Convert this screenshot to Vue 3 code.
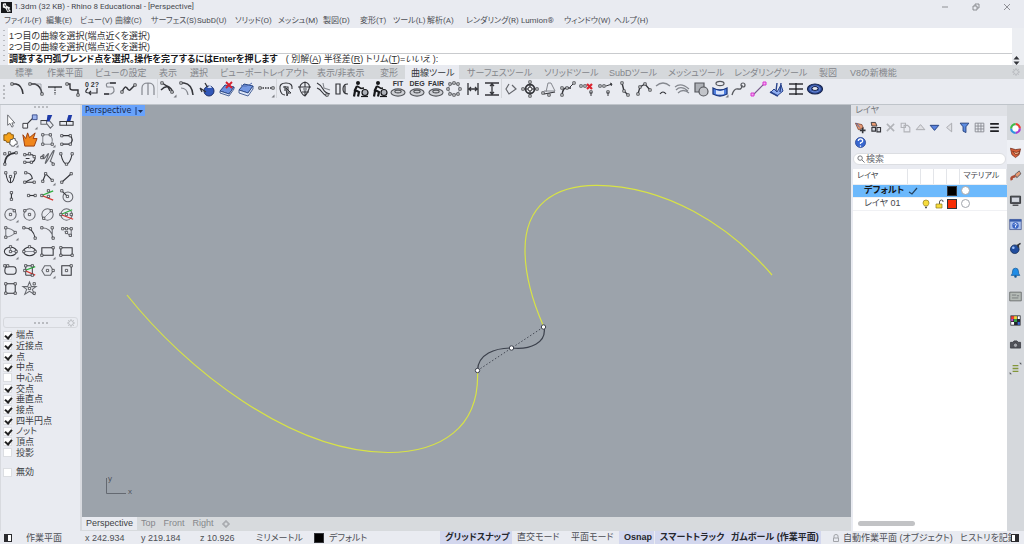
<script setup>
import { ref } from 'vue'

const INK = '#34353a'
const GREY = '#85888f'
const BLUE = '#3157b8'

/* Shape helpers: every icon is a list of shapes in an 18 x 18 box. */
const line = (d, s = INK, w = 1, dash) => ({ d, s, f: 'none', w, dash })
const fill = (d, f, s = 'none', w = 1) => ({ d, s, f, w })
const disc = (x, y, r) => `M${x - r} ${y}a${r} ${r} 0 1 0 ${2 * r} 0a${r} ${r} 0 1 0 ${-2 * r} 0z`
const oval = (x, y, a, b) => `M${x - a} ${y}a${a} ${b} 0 1 0 ${2 * a} 0a${a} ${b} 0 1 0 ${-2 * a} 0z`
const nodes = (...pts) =>
  fill(pts.map(([x, y]) => `M${x - 1.2} ${y - 1.2}h2.4v2.4h-2.4z`).join(''), '#f4f5f8', INK, 0.8)
const more = fill('M17.5 14.500v3h-3z', '#77797f')
const word = (t, x, y, size) => ({ t, x, y, size })
const runner = (dx) => [
  fill(disc(6 + dx, 3, 2), '#17181b'),
  line(`M${5 + dx} 6L${3 + dx} 10L${7 + dx} 12L${6 + dx} 16.500M${3 + dx} 11L${2 + dx} 16.500`, '#17181b', 2.2),
  line(`M${5 + dx} 6L${9 + dx} 8.500L12 8`, '#17181b', 1.5),
  fill(disc(13, 12.5, 3), '#aeb1b8', '#17181b', 1.2),
  line('M9 16.500H16', '#17181b', 1.2),
]
const dish = (t) => [
  word(t, 9, 6, 7),
  fill(oval(9, 12.5, 7, 3.6), '#cfd1d6', '#55575c', 1.1),
  line(oval(9, 11.5, 3.2, 1.4), '#55575c', 1.1),
]

const toolGroups = [
  { id: 'fillets', icons: [
    [line('M4 4H8Q14 5 15 14', INK, 1.5), nodes([4, 4])],
    [line('M3 4H8Q14 6 15 14', INK, 1.5), line('M8 4H14V14', GREY, 0.7), nodes([3, 4], [15, 14])],
    [line('M2 7H16', INK, 1.4), line('M9 7V15', INK, 1.2, '1.5 1')],
    [line('M3 4H6V8Q6 10 9 10H14V15', INK, 1.4), nodes([3, 4], [14, 15])],
    [word('0 2?', 9, 7, 7), line('M5 8Q0 13 6 13H14V8M8 11L6 13L8 15', INK, 1.2)],
    [line('M14 3H8Q4 3 6 7H12Q15 12 10 14H3', GREY, 1.2), line('M9 3H15M3 14H8', INK, 1.3)],
    [line('M2 12Q5 5 7 8T10 10T15 5', INK, 1.5), nodes([2, 12], [15, 5])],
    [line('M3 15V8Q3 3 9 3T15 8V15M9 3V15', GREY, 1.2)],
  ] },
  { id: 'curve-edit', icons: [
    [line('M3 3L8 6Q13 8 14 13M2 10Q6 6 9 7L11 11', INK, 1.4), nodes([3, 3], [13, 12]), more],
    [line('M3 3H6Q14 4 15 15', INK, 1.5), line('M3 8Q9 8 10 15', GREY, 1.2), nodes([3, 3])],
    [fill(disc(11, 11, 5), BLUE, '#1b2d68'), line('M2 8L8 12M7 3L10 8M2 8L4 12', INK, 1.3), fill('M9 8L12 5L14 8z', '#c9d6f5')],
    [fill('M2 11L7 5L16 7L11 14z', '#6b8fdd', '#274481'), fill('M2 11L11 14L16 7V9L11 16L2 13z', '#dce5f7', '#274481', 0.8), line('M8 2L14 8M14 2L8 8', '#d6202f', 1.9)],
    [fill('M2 10L7 4L16 6L11 13z', '#7397e2', '#274481'), fill('M2 10L11 13L16 6V9L11 16L2 13z', '#dce5f7', '#274481', 0.8), line('M4 5Q9 8 15 3', '#506cae')],
    [line('M3 8H16', INK, 1.4, '1.5 1'), nodes([3, 8], [16, 8]), more],
  ] },
  { id: 'curve-tools', icons: [
    [line('M15 9Q16 3 9 3T3 9T8 15M6 7H11V13M8 6V11', INK, 1.1), line('M9 8L14 13L11 13L10 16z', INK)],
    [line('M9 2Q3 4 4 9T9 16M9 2Q15 4 13 9T9 16M2 7H15M6 12H13M9 2V16', INK, 1.1), fill(disc(9, 9, 2), '#92959b')],
    [line('M2 3Q6 5 8 9T15 14M2 8Q5 9 7 12T12 16', INK, 1.1), line('M8 3L9 8L15 10', GREY, 1.1), nodes([12, 15])],
    [line('M3 4H7V14H3zM15 4Q10 4 10 9T15 14M12 4V14', INK, 1.2)],
    runner(0),
    runner(1),
    dish('FIT'),
    dish('DEG'),
    dish('FAIR'),
    [line(disc(9, 9, 5.5), GREY, 0.8), nodes([5, 4], [9, 3], [13, 4], [15, 9], [13, 14], [9, 15], [5, 14], [3, 9])],
    [line('M4 3V15M14 3V15M5 9H13M7 7L5 9L7 11M11 7L13 9L11 11', INK, 1.3)],
    [line('M2 3H16M2 15H16M9 4V14M7 6L9 4L11 6M7 12L9 14L11 12', INK, 1.3, undefined)],
  ] },
  { id: 'points', icons: [
    [line('M7 4L4 9L7 14L14 9L10 5', '#66686e', 1.2)],
    [line('M9 2V16M2 9H16', INK, 1.1), line(disc(9, 9, 4.5), INK, 1.8), fill(disc(9, 9, 2), '#ffffff', INK), nodes([9, 2], [9, 16], [2, 9], [16, 9])],
    [line('M6 12L8 3H11L15 11H4', GREY), line('M4 14L15 12', INK, 1.2), nodes([3, 13], [9, 15])],
    [line('M3 15Q4 7 8 8L12 8', INK, 1.5), nodes([3, 8], [8, 8], [3, 15], [15, 3]), line('M11 7L14 4', INK)],
    [nodes([3, 6], [7, 6], [13, 12]), line('M13 12V16', INK), line('M9 4L14 9M14 4L9 9', '#dc2430', 2.2)],
    [nodes([3, 6], [7, 6], [11, 12]), line('M11 12V16M9 6L15 4M13 3L15 4L14 6', INK)],
    [line('M6 3L8 11L12 15', INK, 1.4), nodes([6, 3], [8, 11], [12, 15])],
    [line('M3 14L5 7L10 4L15 10', INK, 1.3), nodes([5, 7], [10, 4], [15, 10], [3, 14])],
    [line('M2 6Q9 0 16 6', GREY, 1.3), line('M6 14Q9 10 12 14', INK, 1.2)],
    [line('M2 7Q8 2 16 9M3 10Q8 5 15 11M5 13Q10 8 16 13', GREY, 1.2)],
    [fill('M3 3H12V12H3z', '#aeb1b7', '#55575c', 1.2), fill(disc(11.5, 11.5, 4.5), '#c2c4c9', '#55575c', 1.2)],
    [fill('M2 8Q9 12 16 8V14Q9 18 2 14z', '#4f7ede', '#1d397f', 1.3), fill('M5 10Q9 12 13 10V14Q9 15 5 14z', '#dbe5fa'), line(oval(9, 3.5, 4, 2.2), '#55575c', 1.2), more],
    [line('M2 15Q4 8 8 9T12 5', '#55575c', 1.3), line(disc(13, 5, 2), '#55575c', 1.2)],
    [line('M4 15L15 4', '#77598a', 1.1), fill('M2 13h3v3h-3zM14 2h3v3h-3z', '#f3a8f0', '#d734cf')],
    [fill('M3 12L6 9L9 12L13 5L15 11L9 16z', '#8fadf0', '#28438c'), line('M9 3L8 11M13 3L12 12M2 12L10 16', '#28438c', 1.4)],
    [line('M2 4H16M2 9H16M2 14H16M9 4V14', INK, 1.4), fill('M8 3h2v2h-2zM8 8h2v2h-2zM8 13h2v2h-2z', INK)],
    [fill(oval(9, 9, 7.5, 5), '#2e4d9d', '#17244e', 1.2), line(oval(9, 9, 5, 3), '#7d9ce4', 0.8), fill(oval(9, 8.500, 3, 2), '#e9ebf1', '#17244e')],
  ] },
]

const palette = [
  [fill('M6 2V13L8.500 11L10.500 15L12 14L10.500 10.500H13.500z', '#fff', '#66686e')],
  [line('M5 13L13 5', INK, 1.2), fill('M2 11h5v5h-5z', '#f4f5f8', INK), fill('M12 2h5v5h-5z', '#9db4ee', '#3c4f8d'), more],
  [line('M2 8H8V12H2zM8 11L12 16L15 13L11 8', '#66686e', 1.1), fill('M9 2H14L11 9H8z', '#1e3aa8'), line('M2 8H9', INK)],
  [fill('M11 2H15L13 9H9z', '#1e3aa8'), line('M2 9H16V13H2z', INK, 1.1), line('M9 9V13', INK)],
  [fill('M2 4h3l1-2h3l1 2h2v4l-2 1v3h-5l-1-2h-2z', '#f5a21c', '#80530e'), fill('M9 9h2l1-1h2v2l2 1v3h-2l-1 2h-3l-1-2h-1z', '#ffffff', '#55575c'), more],
  [fill('M2 4L5 8L7 2L9 7L15 2L13 8L17 8L14 16H4z', '#f0861c', '#9b3b0b')],
  [line('M4 4H11Q16 8 13 14H4V4', GREY, 1.1), nodes([4, 4], [12, 4], [4, 14], [14, 14]), more],
  [line('M4 5H13Q17 9 13 14H4', INK, 1.3), nodes([4, 5], [13, 5], [4, 14], [13, 14])],
  [line('M3 15Q3 4 14 3', INK, 1.7), nodes([3, 15], [3, 4], [8, 3], [15, 3])],
  [line('M4 5H12Q18 9 12 13H4M5 9H9', INK, 1.2), nodes([4, 5], [9, 4], [14, 7], [4, 13], [11, 13])],
  [line('M2 8Q6 2 5 7T8 6T8 10T12 6T12 12L15 14', '#66686e', 1.2), nodes([3, 8], [15, 15])],
  [line('M3 4C6 18 12 18 15 4', INK, 1.1), nodes([3, 4], [15, 4], [9, 15])],
  [line('M4 4C6 18 12 18 14 4M9 8V14', INK, 1.1), nodes([4, 4], [14, 4], [9, 8])],
  [line('M5 4Q11 4 12 10L4 14H14', INK, 1.1), nodes([5, 4], [14, 14], [4, 14])],
  [line('M4 13L7 5L14 12', INK, 1.2), nodes([4, 13], [7, 5], [14, 12]), more],
  [line('M4 14L14 5', INK, 1.2), nodes([4, 14], [14, 5])],
  [line('M10 6V13', INK, 1.2), nodes([10, 6], [10, 13])],
  [line('M8 9H15', INK, 1.2), nodes([8, 9], [15, 9])],
  [line('M3 9L15 4', '#2cae3e', 1.4), line('M3 9L15 14', '#d8352f', 1.4), nodes([3, 9], [10, 4], [10, 10])],
  [line(disc(10.5, 10.5, 5.2), '#66686e', 1.1), line('M4 4L10 10', INK, 1.1), nodes([4, 4], [10, 10])],
  [line(disc(9, 9, 6), '#66686e', 1.1), nodes([9, 9], [13, 5]), more],
  [line(disc(9, 9, 6), '#66686e', 1.1), nodes([4, 5], [9, 9])],
  [line(disc(9, 9, 6), '#66686e', 1.1), line('M5 13L13 5', GREY), nodes([5, 13], [13, 5])],
  [line(disc(9, 9, 6), '#66686e', 1.1), line('M3 9L15 4', '#2cae3e', 1.3), line('M3 9L16 14', '#d8352f', 1.3), nodes([3, 9], [9, 9], [14, 9])],
  [line('M4 14V4Q11 5 14 9Q11 13 4 14', '#77797f', 1.1), nodes([4, 4], [14, 9], [4, 14]), more],
  [line('M3 4Q13 4 15 15', INK, 1.1), nodes([3, 4], [10, 5], [15, 15])],
  [line('M3 4Q13 4 15 15M14 4V15', '#66686e', 1.1), nodes([3, 4], [14, 4], [15, 15])],
  [line('M5 5H14V13L7 8', '#66686e'), nodes([5, 5], [9, 5], [14, 5], [13, 12], [9, 9])],
  [line(oval(9, 9, 6.5, 4.5), INK, 1.1), line('M9 5V9H15', GREY), nodes([9, 4], [9, 9], [15, 9]), more],
  [line(oval(9, 9, 6.5, 4.5), INK, 1.1), line('M3 9H15', GREY), nodes([3, 9], [15, 9], [9, 4])],
  [line('M3 5H15V13H3z', INK, 1.1), nodes([3, 13], [15, 5]), more],
  [line('M3 5H15V13H3z', INK, 1.1), nodes([3, 5], [3, 13], [15, 13])],
  [line('M6 5H12Q15 5 15 9T12 13H6Q3 13 3 9T6 5', INK, 1.1), nodes([3, 4], [6, 4])],
  [line('M5 4H12V14H5z', INK), line('M4 9L15 5', '#2cae3e', 1.4), line('M4 9L15 14', '#d8352f', 1.4), nodes([5, 4], [12, 4], [4, 9], [12, 14])],
  [line('M6 4H12L15 9L12 14H6L3 9z', '#66686e', 1.1), nodes([9, 9], [15, 9]), more],
  [line('M4 4H14V14H4z', INK, 1.1), nodes([9, 9], [14, 4])],
  [line('M4 4H14V14H4z', INK, 1.1), nodes([4, 4], [14, 4], [14, 14], [4, 14])],
  [line('M9 2L11 7L16 7L12 10L14 15L9 12L4 15L6 10L2 7L7 7z', '#66686e', 1.1), nodes([14, 4], [9, 9], [14, 14])],
]

const layerTools = [
  [fill('M2 3L11 5L13 10L6 12z', '#e79a73', '#773c2a'), line('M3 3L8 9', '#4969b4', 1.3), line('M12 9V17M8 13H16', INK, 2.2)],
  [fill('M3 2H9L11 7H4z', '#e79a73', INK, 1.2), fill('M4 9h5v5h-5zM11 9h5v6h-5z', '#d7dae1', INK, 1.5)],
  [line('M4 4L14 14M14 4L4 14', '#b1b3b8', 2.2)],
  [line('M3 3H9V9H3zM7 6H12L15 9V15H7z', '#b1b3b8', 1.5)],
  [fill('M9 5L15 12H3z', '#dfe0e4', '#a7a9ae', 1.3)],
  [fill('M3 6H15L9 13z', '#5a83e0', '#23417f', 1.3)],
  [fill('M12 3V15L5 9z', '#dfe0e4', '#a7a9ae', 1.3)],
  [fill('M3 3H15L11 8V16L7 14V8z', '#5b8be0', '#23417f', 1.3)],
  [line('M3 3H15V15H3zM3 7H15M3 11H15M7 3V15M11 3V15', '#85888f', 1.2)],
  [line('M3 4H15M3 9H15M3 14H15', '#1d1e22', 2.4)],
  [fill(disc(9, 9, 7), '#3867cf', '#1e3b88'), line('M6 7Q6 4 9 4T12 7Q12 9 9 9.500V11M9 13V15', '#ffffff', 1.8)],
]

const rail = [
  [line('M9 3A6 6 0 0 1 15 9', '#ec3c31', 3), line('M15 9A6 6 0 0 1 9 15', '#a63ad6', 3), line('M9 15A6 6 0 0 1 3 9', '#2a94e0', 3), line('M3 9A6 6 0 0 1 9 3', '#3cbd46', 3), fill(disc(9, 9, 4), '#ffffff')],
  [fill('M2 3L9 5L16 4L14 12L9 16L4 12z', '#d86038', '#6b2718'), fill('M5 7L10 9L15 7L13 11L9 12z', '#f4b78e', '#6b2718')],
  [line('M4 14Q2 10 7 9L9 8', '#ad4c34', 3.5), line('M9 6L14 2L16 5L11 10z', '#4e5158', 1.6), fill('M9 6L14 2L16 5L11 10z', '#e79a73')],
  [fill('M2 3H16V13H2z', '#55585f', INK, 1.3), fill('M4 5H14V11H4z', '#d3d7df'), line('M5 15.500H13', INK, 1.7)],
  [fill('M1 2H17V16H1z', '#a9bfea', '#3f518a'), fill('M1 2H17V5H1z', '#355aa9'), fill(disc(9, 10.5, 4.5), '#3b66c5'), line('M7 9Q8 7 10 8T9 11V13', '#fff', 1.3)],
  [fill(disc(8, 10, 6), '#214d9e', '#102851'), fill(disc(6, 8, 1.8), '#9fc2fb'), line('M11 5L16 2M13 3V8', INK, 2)],
  [fill('M3 13Q5 11 5 7Q5 3 9 3T13 7Q13 11 15 13z', '#1f8ce6', '#145b9b'), fill(disc(9, 14.5, 1.8), '#145b9b')],
  [fill('M1 3H17V15H1z', '#b5bbb6', '#666a6b', 1.2), line('M4 7H10M11 8H14M4 11H13', '#727678', 1.2)],
  [fill('M2 2h14v14h-14z', '#23242b'), fill('M3 3h4v4h-4z', '#ec3f35'), fill('M7 3h4v4h-4z', '#f1d337'), fill('M12 3h3v4h-3zM3 11h4v4h-4z', '#fff'), fill('M7 7h4v4h-4z', '#35a84a'), fill('M12 11h3v4h-3z', '#3c68da'), fill('M3 7h3v3h-3z', '#c64ad2')],
  [fill('M2 6H5L7 4H11L13 6H16V14H2z', '#505359', INK), fill(disc(9, 10, 3), '#a4a7ac', INK)],
  [line('M5 5H13M5 9H13M5 13H13', '#83963a', 1.9), fill('M14 1h3v3zM1 14v3h3z', '#55575c')],
]

const menus = ['ファイル(F)', '編集(E)', 'ビュー(V)', '曲線(C)', 'サーフェス(S)', 'SubD(U)', 'ソリッド(O)', 'メッシュ(M)', '製図(D)', '変形(T)', 'ツール(L)', '解析(A)', 'レンダリング(R)', 'Lumion®', 'ウィンドウ(W)', 'ヘルプ(H)']
const tabs = ['標準', '作業平面', 'ビューの設定', '表示', '選択', 'ビューポートレイアウト', '表示/非表示', '変形', '曲線ツール', 'サーフェスツール', 'ソリッドツール', 'SubDツール', 'メッシュツール', 'レンダリングツール', '製図', 'V8の新機能']
const activeTab = ref('曲線ツール')
const views = ['Perspective', 'Top', 'Front', 'Right']
const activeView = ref('Perspective')

const snaps = ref([
  { name: '端点', on: true }, { name: '近接点', on: true }, { name: '点', on: true },
  { name: '中点', on: true }, { name: '中心点', on: false }, { name: '交点', on: true },
  { name: '垂直点', on: true }, { name: '接点', on: true }, { name: '四半円点', on: true },
  { name: 'ノット', on: true }, { name: '頂点', on: true }, { name: '投影', on: false },
])
const snapsOff = ref(false)

const modes = ref([
  { name: 'グリッドスナップ', on: true }, { name: '直交モード', on: false }, { name: '平面モード', on: false },
  { name: 'Osnap', on: true }, { name: 'スマートトラック', on: true }, { name: 'ガムボール (作業平面)', on: true },
])
</script>

<template>
  <div class="app">
    <header class="title">
      <svg class="logo" viewBox="0 0 12 12"><rect width="12" height="12" fill="#17181b" /><path d="M2 2L5 1L6 4L10 6L9 8L11 10L7 11L5 7L2 6Z" fill="#f2f2f2" /><path d="M4 3L5 5M7 7L8 10" stroke="#17181b" /></svg>
      <span class="caption">1.3dm (32 KB) - Rhino 8 Educational - [Perspective]</span>
      <div class="window-buttons">
        <button aria-label="最小化"><svg viewBox="0 0 8 8"><path d="M1 4H7" /></svg></button>
        <button aria-label="元に戻す"><svg viewBox="0 0 8 8"><path d="M1 3H5V7H1ZM3 3V1H7V5H5" /></svg></button>
        <button aria-label="閉じる"><svg viewBox="0 0 8 8"><path d="M1 1L7 7M7 1L1 7" /></svg></button>
      </div>
    </header>

    <nav class="menus"><button v-for="m in menus" :key="m">{{ m }}</button></nav>

    <section class="command">
      <i class="grip tall"></i>
      <div class="console">
        <div class="history"><p>1つ目の曲線を選択(端点近くを選択)</p><p>2つ目の曲線を選択(端点近くを選択)</p></div>
        <div class="prompt">
          <b>調整する円弧ブレンド点を選択。操作を完了するにはEnterを押します</b>
          <span>( 別解(<u>A</u>) 半径差(<u>R</u>) トリム(<u>T</u>)=<em>いいえ</em> ):</span>
        </div>
      </div>
      <div class="scroll"><button aria-label="スクロール"><svg viewBox="0 0 9 9"><path d="M4.500 0L7.500 3.500H1.500ZM4.500 9L7.500 5.500H1.500Z" /></svg></button></div>
    </section>

    <div class="tab-row">
      <nav class="tabs">
        <button v-for="t in tabs" :key="t" :class="{ active: t === activeTab }" @click="activeTab = t">{{ t }}</button>
      </nav>
      <svg class="gear" viewBox="0 0 10 10"><circle cx="5" cy="5" r="3" /><path d="M5 0V2M5 8V10M0 5H2M8 5H10M1.500 1.500L3 3M7 7L8.500 8.500M8.500 1.500L7 3M3 7L1.500 8.500" /></svg>
    </div>

    <div class="tools">
      <i class="grip tall"></i>
      <div v-for="g in toolGroups" :key="g.id" class="tool-group" :class="g.id">
        <button v-for="(icon, i) in g.icons" :key="i" class="tool" :aria-label="g.id + ' ' + (i + 1)">
          <svg viewBox="0 0 18 18">
            <template v-for="(s, k) in icon" :key="k">
              <text v-if="s.t" :x="s.x" :y="s.y" :font-size="s.size">{{ s.t }}</text>
              <path v-else :d="s.d" :stroke="s.s" :fill="s.f" :stroke-width="s.w" :stroke-dasharray="s.dash" />
            </template>
          </svg>
        </button>
      </div>
    </div>

    <main class="work">
      <aside class="left">
        <div class="grip-row"><i class="grip wide"></i></div>
        <div class="palette">
          <button v-for="(icon, i) in palette" :key="i" class="tool" :aria-label="'tool ' + (i + 1)">
            <svg viewBox="0 0 18 18">
              <path v-for="(s, k) in icon" :key="k" :d="s.d" :stroke="s.s" :fill="s.f" :stroke-width="s.w" />
            </svg>
          </button>
        </div>
        <div class="snap-head"><i class="grip wide"></i>
          <svg class="gear" viewBox="0 0 10 10"><circle cx="5" cy="5" r="3" /><path d="M5 0V2M5 8V10M0 5H2M8 5H10M1.500 1.500L3 3M7 7L8.500 8.500M8.500 1.500L7 3M3 7L1.500 8.500" /></svg>
        </div>
        <div class="snaps">
          <label v-for="s in snaps" :key="s.name"><input v-model="s.on" type="checkbox">{{ s.name }}</label>
        </div>
        <div class="snap-off"><label><input v-model="snapsOff" type="checkbox">無効</label></div>
      </aside>

      <section class="center">
        <div class="viewport">
          <button class="view-name"><span>Perspective</span><svg viewBox="0 0 8 8"><path d="M1 0V8" stroke="#1c3c78" /><path d="M3 3H8L5.500 6Z" fill="#1c2f56" /></svg></button>
          <svg class="scene" viewBox="82 105 769 412" preserveAspectRatio="xMinYMin">
            <g class="curve">
              <path d="M127 295C185 368 290 452 388 452.500C440 452.500 480 428 477.500 371" />
              <path d="M543 325C533 302 525 276 525 250C525 205 555 185 597 185.300C665 186 728 224 772 275" />
            </g>
            <path class="chord" d="M477.500 370.500L543.500 327" />
            <path class="blend" d="M477.500 370.500C478 354 495 348 511.500 348C530 350 547 343 544 327" />
            <g class="handles"><circle cx="477.500" cy="370.500" r="2.200" /><circle cx="511.500" cy="348" r="2.200" /><circle cx="543.500" cy="327" r="2.200" /></g>
            <path class="axis" d="M106.500 478V493.500H126" />
            <text x="108" y="481">y</text><text x="128" y="494">x</text>
          </svg>
        </div>
        <nav class="views">
          <button v-for="v in views" :key="v" :class="{ active: v === activeView }" @click="activeView = v">{{ v }}</button>
          <button aria-label="追加"><svg viewBox="0 0 8 8"><path d="M3 1H5V3H7V5H5V7H3V5H1V3H3Z" /></svg></button>
        </nav>
      </section>

      <aside class="layers">
        <header><span>レイヤ</span>
          <svg class="gear" viewBox="0 0 10 10"><circle cx="5" cy="5" r="3" /><path d="M5 0V2M5 8V10M0 5H2M8 5H10M1.500 1.500L3 3M7 7L8.500 8.500M8.500 1.500L7 3M3 7L1.500 8.500" /></svg>
        </header>
        <div class="layer-body">
          <div class="layer-tools">
            <button v-for="(icon, i) in layerTools" :key="i" :aria-label="'layer tool ' + (i + 1)">
              <svg viewBox="0 0 18 18"><path v-for="(s, k) in icon" :key="k" :d="s.d" :stroke="s.s" :fill="s.f" :stroke-width="s.w" /></svg>
            </button>
          </div>
          <label class="search"><svg viewBox="0 0 9 9"><circle cx="3.500" cy="3.500" r="2.500" /><path d="M5.500 5.500L8.500 8.500" /></svg><input type="search" placeholder="検索" aria-label="検索"></label>
          <div class="list">
            <table>
              <colgroup><col class="c-name"><col class="c-flag"><col class="c-flag"><col class="c-flag"><col class="c-flag"><col></colgroup>
              <thead><tr><th>レイヤ</th><th></th><th></th><th></th><th></th><th>マテリアル</th></tr></thead>
              <tbody>
                <tr class="current">
                  <td>デフォルト</td>
                  <td><svg viewBox="0 0 10 10"><path d="M1 6L4 8L9 2" fill="none" stroke="#26435f" stroke-width="1.200" /></svg></td>
                  <td></td><td></td><td><i class="swatch black"></i></td><td><i class="material"></i></td>
                </tr>
                <tr>
                  <td>レイヤ 01</td><td></td>
                  <td><svg viewBox="0 0 10 10"><path d="M3.500 7Q2 5 2 4Q2 1 5 1T8 4Q8 5 6.500 7Z" fill="#f7dc3c" stroke="#8f7d20" stroke-width=".7" /><path d="M4 8.500H6" stroke="#55575c" stroke-width="1.500" /></svg></td>
                  <td><svg viewBox="0 0 10 10"><path d="M5.500 5V3Q5.500 1 7.500 1T9 3" fill="none" stroke="#55575c" /><path d="M2 5H8V9H2Z" fill="#f7dc3c" stroke="#8f7d20" stroke-width=".7" /></svg></td>
                  <td><i class="swatch red"></i></td><td><i class="material"></i></td>
                </tr>
              </tbody>
            </table>
            <i class="thumb"></i>
          </div>
        </div>
      </aside>

      <nav class="rail">
        <button v-for="(icon, i) in rail" :key="i" :class="{ active: i === 1 }" :aria-label="'panel ' + (i + 1)">
          <svg viewBox="0 0 18 18"><path v-for="(s, k) in icon" :key="k" :d="s.d" :stroke="s.s" :fill="s.f" :stroke-width="s.w" /></svg>
        </button>
      </nav>
    </main>

    <footer class="status">
      <button aria-label="左パネル"><svg viewBox="0 0 8 8"><path d="M0 0H8V8H0Z" fill="#2b2b2f" /><path d="M4 1H7V7H4Z" fill="#fff" /></svg></button>
      <span>作業平面</span><span>x 242.934</span><span>y 219.184</span><span>z 10.926</span><span>ミリメートル</span>
      <span class="layer-now"><i class="swatch black"></i>デフォルト</span>
      <button v-for="m in modes" :key="m.name" class="mode" :class="{ on: m.on }" @click="m.on = !m.on"><span>{{ m.name }}</span></button>
      <span class="auto"><svg viewBox="0 0 8 8"><path d="M2 4V2Q2 .5 4 .5T6 2V4M1.500 4H6.500V7.500H1.500Z" fill="none" stroke="#a2a4a9" /></svg>自動作業平面 (オブジェクト)</span>
      <span class="record">ヒストリを記録</span>
      <button aria-label="右パネル"><svg viewBox="0 0 8 8"><path d="M0 0H8V8H0Z" fill="#2b2b2f" /><path d="M1 1H4V7H1Z" fill="#fff" /></svg></button>
    </footer>
  </div>
</template>

<style>
html, body { background: #e9ebf1; }
</style>

<style scoped>
* { box-sizing: border-box; }
.app {
  display: flex;
  flex-direction: column;
  min-height: 100vh;
  color: #4d4f55;
  background: #e9ebf1;
  font: 9px/12px "Liberation Sans", "Noto Sans CJK JP", sans-serif;
  font-feature-settings: "palt";
}
button { font: inherit; color: inherit; background: none; border: 0; padding: 0; margin: 0; text-align: left; white-space: nowrap; }
svg { display: block; }
i { display: block; }
p { margin: 0; }

.title { display: flex; align-items: center; height: 14px; }
.logo { width: 11px; height: 11px; margin-left: 1px; }
.caption { margin-left: 2px; font-family: Roboto, sans-serif; font-size: 8px; color: #45474d; }
.window-buttons { display: flex; gap: 23px; margin-left: auto; margin-right: 13px; }
.window-buttons svg { width: 8px; height: 8px; fill: none; stroke: #77797f; stroke-width: .8; }

.menus {
  display: grid;
  grid-template-columns: 42px 34px 35px 36px 46px 38px 43px 45px 37px 33px 34px 39px 55px 43px 50px auto;
  height: 14px;
  padding-left: 4px;
  font-family: Roboto, "Noto Sans CJK JP", sans-serif;
  font-size: 8px;
}

.command { display: flex; height: 37px; background: #fff; }
.console { flex: 1; color: #333; line-height: 11px; white-space: nowrap; overflow: hidden; }
.history { height: 26px; padding: 3px 1px 0; border-bottom: 1px solid #c9cbce; }
.prompt { display: flex; gap: 8px; padding-left: 1px; line-height: 10px; }
.prompt b { color: #17181b; }
.prompt em { font-style: italic; }
.scroll { display: flex; align-items: flex-end; width: 12px; background: #eceef2; }
.scroll svg { width: 9px; height: 9px; fill: #33353a; }

.grip { flex: none; background-image: radial-gradient(circle, #b9bbc0 1px, transparent 1px); background-size: 4px 4px; }
.grip.tall { width: 4px; height: 16px; align-self: center; margin: 0 2px; }
.command .grip { height: 37px; width: 8px; margin: 0; background-color: #e9ebf1; background-size: 8px 5px; }
.grip.wide { width: 16px; height: 4px; }
.gear { width: 8px; height: 8px; fill: none; stroke: #b4b6bb; stroke-width: 1; }

.tab-row { display: flex; align-items: center; height: 14px; background: #d5d8db; color: #84868b; }
.tab-row .gear { margin-left: auto; margin-right: 4px; }
.tabs {
  display: grid;
  grid-template-columns: 32px 48px 64px 31px 30px 97px 63px 31px 56px 77px 65px 59px 66px 85px 31px auto;
  padding-left: 9px;
}
.tabs button { height: 14px; padding: 2px 4px 0 6px; justify-self: start; }
.tabs .active { color: #33353a; background: #e9ebf1; }

.tools { display: flex; height: 26px; border-bottom: 1px solid #bfc4ca; }
.tool { display: flex; justify-content: center; align-items: center; }
.tool svg { width: 18px; height: 18px; }
.tool text { font-family: "Liberation Sans", sans-serif; font-weight: 700; text-anchor: middle; fill: #33353a; }
.tool-group { display: grid; grid-auto-flow: column; grid-auto-columns: 1fr; height: 19px; border-right: 1px solid #d4d6db; }
.fillets { width: 150px; }
.curve-edit { width: 119px; }
.curve-tools { width: 225px; }
.points { width: 322px; border: 0; }

.work { flex: 1; display: flex; }
.left { width: 82px; border-right: 2px solid #d8dadf; border-left: 1px solid #d8dadf; }
.grip-row { display: flex; justify-content: center; height: 7px; }
.palette { display: grid; grid-template-columns: repeat(4, 1fr); grid-template-rows: repeat(10, 1fr); height: 186px; padding-right: 4px; }
.palette .tool svg { width: 17px; height: 17px; }
.snap-head { display: flex; align-items: center; height: 11px; margin: 19px 2px 2px; border: 1px solid #d6d8dd; border-radius: 3px; padding-left: 29px; }
.snap-head .gear { margin-left: auto; margin-right: 2px; }
.snaps { display: grid; grid-template-rows: repeat(12, 1fr); height: 128px; }
.left label { display: flex; align-items: center; gap: 4px; padding-left: 2px; line-height: 10px; color: #3d3f45; }
.left input { appearance: none; position: relative; width: 9px; height: 9px; margin: 0; border: 1px solid #dcdee2; background: #fff; }
.left input:checked::after { content: ""; position: absolute; left: 2px; top: 0; width: 3px; height: 5px; border: solid #222; border-width: 0 2px 2px 0; transform: rotate(40deg); }
.snap-off { padding-top: 9px; }

.center { flex: 1; display: flex; flex-direction: column; min-width: 0; background: #d7dadd; }
.viewport { position: relative; flex: 1; background: #9ca3ab; }
.view-name { position: absolute; left: 0; top: 0; display: flex; gap: 4px; align-items: center; height: 11px; padding: 0 2px 0 3px; background: #68a2fb; color: #16294c; font-size: 8px; font-family: "DejaVu Sans", sans-serif; }
.view-name svg { width: 8px; height: 8px; }
.scene { width: 100%; }
.scene text { font-size: 8px; fill: #50545b; }
.curve { fill: none; stroke: #d8e345; stroke-width: 1.2; }
.chord { stroke: #454a55; stroke-dasharray: 1.500 2; }
.blend { fill: none; stroke: #3b404b; stroke-width: 1.2; }
.handles { fill: #fff; stroke: #3b404b; }
.axis { fill: none; stroke: #646971; }
.views { display: flex; height: 14px; color: #85878c; }
.views button { padding: 0 4px; height: 13px; line-height: 13px; }
.views .active { color: #3d3f45; background: #e9ebf1; }
.views svg { width: 8px; height: 8px; fill: none; stroke: #999ba0; }

.layers { width: 156px; display: flex; flex-direction: column; background: #e9ebf1; }
.layers header { display: flex; align-items: center; height: 11px; padding-left: 4px; color: #77797f; background: #dfe1e6; line-height: 11px; margin-right: -17px; }
.layers header .gear { margin-left: auto; margin-right: 4px; }
.layer-body { flex: 1; display: flex; flex-direction: column; padding-left: 2px; }
.layer-tools { display: grid; grid-template-columns: repeat(10, 1fr); margin: 4px 5px 0 0; }
.layer-tools button { display: flex; justify-content: center; align-items: center; height: 15px; }
.layer-tools svg { width: 13px; height: 13px; }
.search { display: flex; align-items: center; gap: 1px; height: 12px; margin: 3px 1px 4px 0; padding: 0 3px; border-radius: 6px; background: #fff; border: 1px solid #dcdee2; }
.search svg { width: 8px; height: 8px; fill: none; stroke: #66686e; }
.search input { flex: 1; min-width: 0; font: inherit; border: 0; padding: 0; background: none; height: 10px; line-height: 10px; }
.search input::placeholder { color: #66686e; opacity: 1; }
.list { flex: 1; display: flex; flex-direction: column; background: #fff; }
table { width: 100%; table-layout: fixed; border-collapse: collapse; color: #45474d; }
.c-name { width: 54px; }
.c-flag { width: 13px; }
th { height: 15px; padding: 0 0 0 4px; text-align: left; font-weight: 400; font-size: 8px; border-right: 1px solid #e3e5e9; border-bottom: 1px solid #eceef1; }
td { height: 13px; padding: 0 1px; border-bottom: 1px solid #f0f1f4; line-height: 11px; white-space: nowrap; }
td:first-child { padding-left: 11px; }
td svg { width: 10px; height: 10px; }
.current { background: #6cb9fc; }
.current td:first-child { color: #17181b; font-weight: 700; }
.swatch { width: 10px; height: 10px; border: 1px solid #33353a; }
.black { background: #000; }
.red { background: #f62d05; }
.material { width: 9px; height: 9px; margin-left: 1px; border: 1px solid #a2a6ad; border-radius: 50%; background: #fff; }
.thumb { width: 57px; height: 5px; margin: auto 0 5px 5px; border-radius: 3px; background: #c2c3c5; }

.rail { width: 17px; padding-top: 11px; background: #d5d8dc; }
.rail button { display: flex; justify-content: center; align-items: center; width: 100%; height: 24px; }
.rail svg { width: 13px; height: 13px; }
.rail .active { background: #eef0f5; }

.status {
  display: grid;
  grid-template-columns: 22px 59px 56px 59px 56px 58px 126px 72px 54px 53px 36px 71px 106px 128px 1fr 13px;
  align-items: center;
  height: 13px;
  padding-left: 4px;
  color: #4d4f55;
  white-space: nowrap;
}
.status button svg { width: 8px; height: 8px; }
.layer-now, .auto { display: flex; align-items: center; gap: 5px; }
.auto { gap: 3px; }
.auto svg { width: 8px; height: 8px; }
.mode span { display: inline-block; padding: 0 2px 0 5px; height: 13px; line-height: 13px; }
.mode.on span { background: #d3d7ee; color: #24262c; font-weight: 700; }
.record { overflow: hidden; }
</style>
